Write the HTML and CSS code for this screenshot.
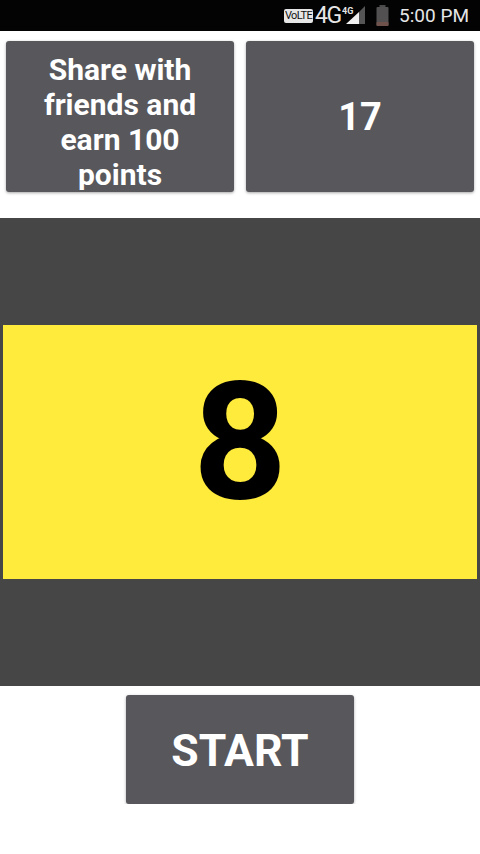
FILE: index.html
```html
<!DOCTYPE html>
<html lang="en">
<head>
    <meta charset="UTF-8">
    <meta name="viewport" content="width=device-width, initial-scale=1.0">
    <title>Number Game</title>
    <link rel="stylesheet" href="styles.css">
</head>
<body>
    <header class="status-bar">
        <span class="volte">VoLTE</span>
        <span class="network">4G</span>
        <svg class="signal" width="23" height="22" viewBox="0 0 23 22">
            <polygon points="4,19 17,7 17,19" fill="#f0f0f0"></polygon>
            <polygon points="17,7 23,1 23,19 17,19" fill="#555555"></polygon>
            <text x="0" y="9" class="signal-text">4G</text>
        </svg>
        <svg class="battery" width="13" height="21" viewBox="0 0 13 21">
            <rect x="3.5" y="0" width="6" height="2" fill="#4a4a4a"></rect>
            <rect x="0.5" y="2" width="12" height="19" rx="1" fill="#525050"></rect>
            <rect x="0.5" y="17" width="12" height="4" rx="1" fill="#6f524c"></rect>
        </svg>
        <span class="clock">5:00 PM</span>
    </header>
    <main>
        <section class="top-row">
            <button class="btn share-btn"><span class="share-label">Share with friends and earn 100 points</span></button>
            <button class="btn score-btn">17</button>
        </section>
        <section class="board">
            <div class="number-box">8</div>
        </section>
        <div class="start-row">
            <button class="btn start-btn">START</button>
        </div>
    </main>
</body>
</html>
```

FILE: styles.css
```css
body {
    margin: 0;
    background-color: #ffffff;
    font-family: Roboto, "Liberation Sans", sans-serif;
}

.status-bar {
    display: flex;
    align-items: center;
    justify-content: flex-end;
    height: 31px;
    padding-right: 11px;
    background-color: #030303;
    color: #e6e6e6;
}

.volte {
    box-sizing: border-box;
    width: 29px;
    height: 14px;
    border-radius: 2px;
    background-color: #e6e6e6;
    color: #111111;
    font-size: 11px;
    line-height: 14px;
    text-align: center;
    letter-spacing: -0.6px;
}

.network {
    width: 27px;
    margin-left: 2px;
    font-size: 23px;
    line-height: 22px;
    letter-spacing: -1.5px;
}

.signal-text {
    font-size: 9px;
    font-weight: 700;
    fill: #e6e6e6;
}

.battery {
    margin-left: 11px;
}

.clock {
    margin-left: 10px;
    font-size: 19px;
}

main {
    display: flex;
    flex-direction: column;
}

.btn {
    border: none;
    border-radius: 3px;
    background-color: #58585c;
    color: #ffffff;
    font-family: Roboto, "Liberation Sans", sans-serif;
    font-weight: 700;
    box-shadow: 0 1px 3px rgba(0, 0, 0, 0.35);
}

.top-row {
    display: grid;
    grid-template-columns: 228px 228px;
    gap: 12px;
    padding: 10px 6px 0;
}

.share-btn,
.score-btn {
    height: 151px;
}

.share-btn {
    display: block;
    padding: 8px 30px 0;
    font-size: 30px;
}

.share-label {
    display: block;
    height: 138px;
    overflow: hidden;
    line-height: 35.3px;
}

.score-btn {
    padding-top: 2px;
    font-size: 38px;
}

.board {
    display: flex;
    align-items: center;
    height: 468px;
    margin-top: 26px;
    padding: 0 3px;
    background-color: #464646;
}

.number-box {
    flex: 1;
    box-sizing: border-box;
    height: 254px;
    padding-bottom: 20px;
    background-color: #ffeb3b;
    color: #000000;
    font-size: 164px;
    font-weight: 700;
    line-height: 234px;
    text-align: center;
}

.start-row {
    display: flex;
    justify-content: center;
    padding-top: 9px;
}

.start-btn {
    width: 228px;
    height: 109px;
    padding-top: 3px;
    font-size: 44.5px;
}
```
